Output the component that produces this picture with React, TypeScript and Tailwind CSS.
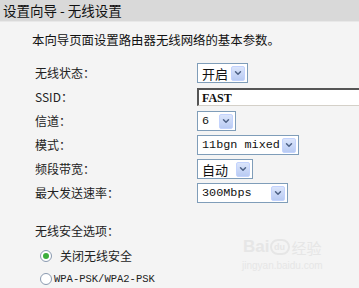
import {ChevronDown} from 'lucide-react';

const cjk = '"Noto Sans CJK SC", "Liberation Sans", sans-serif';
const mono = '"Liberation Mono", "Noto Sans CJK SC", monospace';

function Select({value, width, latin}: {value: string; width: string; latin?: boolean}) {
  return (
    <div
      className={`flex shrink-0 items-center justify-between h-[20px] bg-white border border-[#7f9db9] pl-[4px] pr-[2px] ${width}`}>
      <span
        className={latin ? 'text-[11.8px] text-[#111] leading-none whitespace-nowrap' : 'text-[13px] text-[#111] leading-none whitespace-nowrap'}
        style={{fontFamily: latin ? mono : cjk}}>
        {value}
      </span>
      <span className="w-[14px] h-[15px] shrink-0 flex items-center justify-center rounded-[2px] bg-gradient-to-b from-[#dbe5fb] to-[#b9cbf3] border border-[#c3d3fd]">
        <ChevronDown className="w-[10px] h-[10px] text-[#4d6185]" strokeWidth={3.5} />
      </span>
    </div>
  );
}

function Row({label, children}: {label: string; children: React.ReactNode}) {
  return (
    <div className="flex items-center h-[24px]">
      <span className="w-[162px] shrink-0 text-[12px] text-[#222]" style={{fontFamily: cjk}}>
        {label}
      </span>
      {children}
    </div>
  );
}

function Radio({checked}: {checked?: boolean}) {
  return (
    <span className="w-[12px] h-[12px] shrink-0 rounded-full border border-[#8a9ab0] bg-white flex items-center justify-center">
      {checked && <span className="w-[6px] h-[6px] rounded-full bg-[#3cae3c]" />}
    </span>
  );
}

export default function App() {
  return (
    <div className="w-[359px] h-[288px] overflow-hidden bg-[#f4f4f4] relative" style={{fontFamily: cjk}}>
      <div className="h-[22px] bg-[#d9d9d9] flex items-center pl-[3px] border-b border-[#e8e8e8]">
        <span className="text-[13.5px] text-[#111] leading-none">设置向导 - 无线设置</span>
      </div>

      <div className="pl-[32px] pt-[12px]">
        <p className="text-[12.4px] text-[#111] leading-none">本向导页面设置路由器无线网络的基本参数。</p>
      </div>

      <div className="pl-[35px] pt-[15px] flex flex-col">
        <Row label="无线状态：">
          <Select value="开启" width="w-[51px]" />
        </Row>
        <Row label="SSID：">
          <div className="flex-1 h-[18px] bg-white border-t-2 border-l-2 border-t-[#555] border-l-[#555] border-b border-b-[#d4d0c8] flex items-center pl-[3px]">
            <span className="text-[12px] font-bold text-[#111] leading-none" style={{fontFamily: '"Liberation Serif", serif'}}>
              FAST
            </span>
          </div>
        </Row>
        <Row label="信道：">
          <Select value="6" width="w-[39px]" latin />
        </Row>
        <Row label="模式：">
          <Select value="11bgn mixed" width="w-[102px]" latin />
        </Row>
        <Row label="频段带宽：">
          <Select value="自动" width="w-[56px]" />
        </Row>
        <Row label="最大发送速率：">
          <Select value="300Mbps" width="w-[91px]" latin />
        </Row>

        <div className="pt-[20px] text-[12px] text-[#222] leading-none">无线安全选项：</div>

        <div className="pl-[5px] pt-[13px] flex flex-col gap-[11px]">
          <div className="flex items-center gap-[8px] h-[12px]">
            <Radio checked />
            <span className="text-[12px] text-[#222] leading-none">关闭无线安全</span>
          </div>
          <div className="flex items-center gap-[2px] h-[12px]">
            <Radio />
            <span className="text-[10.5px] text-[#222] leading-none" style={{fontFamily: mono}}>
              WPA-PSK/WPA2-PSK
            </span>
          </div>
        </div>
      </div>

      <div className="absolute left-[242px] top-[238px] flex flex-col items-center text-[#e6e6e6] pointer-events-none">
        <div className="flex items-end leading-none">
          <span className="text-[17px] font-bold" style={{fontFamily: '"Liberation Sans", sans-serif'}}>Bai</span>
          <span className="w-[20px] h-[16px] rounded-full border-2 border-[#e6e6e6] text-[9px] font-bold flex items-center justify-center" style={{fontFamily: '"Liberation Sans", sans-serif'}}>
            du
          </span>
          <span className="text-[15px] ml-[2px]">经验</span>
        </div>
        <span className="text-[10px] mt-[3px]" style={{fontFamily: '"Liberation Sans", sans-serif'}}>jingyan.baidu.com</span>
      </div>
    </div>
  );
}
